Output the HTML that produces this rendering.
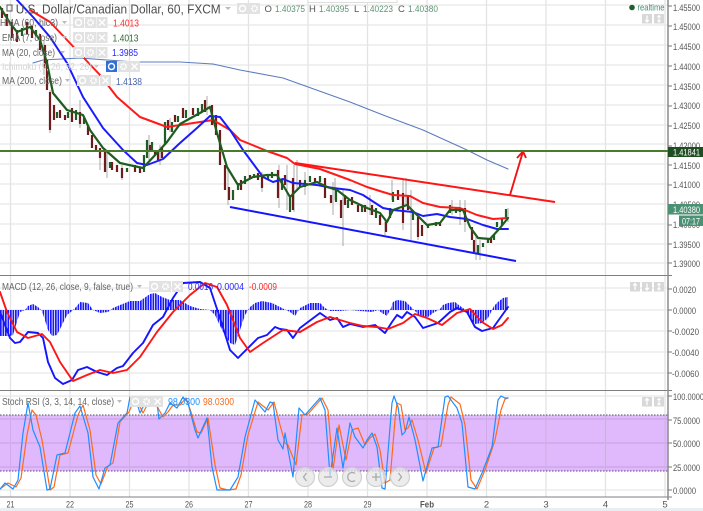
<!DOCTYPE html>
<html><head><meta charset="utf-8"><style>
html,body{margin:0;padding:0;background:#fff;width:703px;height:511px;overflow:hidden}
svg{display:block;filter:blur(.35px)}
text{font-family:"Liberation Sans",sans-serif;font-size:9.5px;fill:#555}
.a text{font-size:9.5px;fill:#555}
.l{font-size:10px;fill:#666}
.v{font-size:10px}
polyline{stroke-linejoin:round;stroke-linecap:round}
</style></head><body>
<svg width="703" height="511" viewBox="0 0 703 511" xmlns="http://www.w3.org/2000/svg">
<defs>
<pattern id="h" width="2.5" height="20" patternUnits="userSpaceOnUse"><rect width="1.7" height="20" fill="#1a1aff"/></pattern>
<g id="ib"><rect width="11" height="11" fill="#e2e2e2"/><circle cx="5.5" cy="5.5" r="3" fill="none" stroke="#fff" stroke-width="1.4"/></g>
<g id="ig"><rect width="11" height="11" fill="#e2e2e2"/><circle cx="5.5" cy="5.5" r="2.6" fill="none" stroke="#fff" stroke-width="2" stroke-dasharray="1.5 .8"/></g>
<g id="ix"><rect width="11" height="11" fill="#e2e2e2"/><path d="M2.5 2.5l6 6M8.5 2.5l-6 6" stroke="#fff" stroke-width="1.4"/></g>
<g id="au"><rect width="10" height="9.5" fill="#d8d8d8"/><path d="M5 1.5v6.5M3.2 3.5L5 1.5l1.8 2" stroke="#fff" stroke-width="1.3" fill="none"/></g>
<g id="ad"><rect width="10" height="9.5" fill="#d8d8d8"/><path d="M5 1.5v6.5M3.2 6L5 8l1.8-2" stroke="#fff" stroke-width="1.3" fill="none"/></g>
<g id="ab"><rect width="10" height="9.5" fill="#d8d8d8"/><path d="M5 1.5v6.5M3.5 3L5 1.5 6.5 3M3.5 6.5L5 8l1.5-1.5" stroke="#fff" stroke-width="1.1" fill="none"/></g>
</defs>

<!-- RSI band -->
<rect x="0" y="415" width="668" height="56" fill="#e0b9fc"/>

<!-- grid -->
<path d="M10.5 0V497M70 0V497M129.5 0V497M189 0V497M248.5 0V497M308 0V497M367.5 0V497M427 0V497M486.5 0V497M546 0V497M605.5 0V497M665 0V497" stroke="#e3e3e3" stroke-width="1.3" fill="none"/>
<path d="M0 5H668M0 25H668M0 45H668M0 65H668M0 85H668M0 105H668M0 125H668M0 144H668M0 164H668M0 184H668M0 204H668M0 224H668M0 244H668M0 263H668M0 288H668M0 310H668M0 331H668M0 352H668M0 373H668M0 396H668M0 490H668" stroke="#e6e6e6" stroke-width="1.3" fill="none"/>
<path d="M0 419H668M0 443H668M0 467H668" stroke="#c9a6e6" stroke-width="1.2" fill="none"/>
<path d="M10.5 415V471M70 415V471M129.5 415V471M189 415V471M248.5 415V471M308 415V471M367.5 415V471M427 415V471M486.5 415V471M546 415V471M605.5 415V471M665 415V471" stroke="#cfaaea" stroke-width="1.2" fill="none"/>
<path d="M0 415H668M0 471H668" stroke="#5d4a70" stroke-width="1" stroke-dasharray="1.5 1.5" fill="none"/>

<!-- separators -->
<path d="M0 275.5H672M0 390.5H672M0 497H672" stroke="#7f7f7f" stroke-width="1.1" fill="none"/>
<path d="M668 0V500" stroke="#8c8c8c" stroke-width="1.5" fill="none"/>
<path d="M668 6h4M668 26h4M668 46h4M668 66h4M668 86h4M668 106h4M668 126h4M668 146h4M668 165h4M668 185h4M668 205h4M668 225h4M668 244h4M668 263h4M668 289h4M668 310h4M668 331h4M668 352h4M668 373h4M668 396h4M668 420h4M668 443h4M668 467h4M668 490h4" stroke="#777" stroke-width="1" fill="none"/>
<rect x="0" y="508" width="703" height="3" fill="#e9eff1"/>

<!-- MA200 -->
<polyline fill="none" stroke="#5c7cc0" stroke-width="1.1" points="33,63 43,60 80,58 133,62 180,62 213,64 240,70 283,78 350,102 383,115 423,130 467,150 487,160 508,169"/>

<!-- wicks -->
<path d="M50 90V133M44 40V75M80 100V128M100 148V170M107 150V178M122 165V180M149 135V160M160 145V165M170 118V132M207 96V115M228 170V205M262 172V192M279 165V208M287 165V210M294 165V212M297 160V190M343 190V246M333 182V215M305 172V195M406 178V205M403 180V230M411 190V240M418 215V240M452 200V215M460 200V225M465 200V232M476 235V260M480 240V260M508 208V222M335 178V200M392 180V200M370 195V215M385 218V235" stroke="#a8a8a8" stroke-width="1" fill="none"/>

<!-- candles red -->
<path d="M2 8V18M7 14V26M12 22V38M17 30V42M27 22V34M32 26V38M40 34V50M45 45V68M47 60V90M50 92V130M54 105V120M60 110V118M65 115V120M72 108V122M80 112V124M88 125V135M92 135V148M96 145V152M100 148V158M105 152V172M112 162V170M117 165V172M122 168V178M135 165V172M140 168V173M150 145V152M155 150V155M158 152V160M162 148V158M168 120V130M175 115V122M183 108V118M193 108V115M205 100V112M212 105V125M216 115V135M220 130V165M225 165V190M229 187V200M241 180V190M250 175V178M258 173V180M262 176V188M278 170V198M285 175V185M293 178V210M300 180V187M315 178V183M325 178V198M331 195V203M341 200V218M345 195V205M352 197V205M358 205V212M365 205V212M372 205V215M380 215V225M386 222V232M398 190V200M403 193V223M408 195V210M418 217V237M422 225V236M440 222V226M465 208V222M472 227V240M474 240V252M491 238V243" stroke="#6e1b1b" stroke-width="2.2" fill="none"/>
<!-- candles green -->
<path d="M22 28V36M36 30V36M57 112V118M68 112V118M76 110V120M84 118V124M110 162V168M127 168V172M144 155V172M147 140V158M152 142V152M165 122V145M172 122V132M178 116V122M186 110V118M198 108V116M202 104V112M233 190V200M238 183V190M245 176V184M254 174V178M268 174V180M272 172V178M282 180V190M290 195V212M305 180V187M310 176V182M320 176V182M336 190V202M348 200V208M362 205V212M376 208V218M390 208V218M393 192V202M413 212V220M428 225V228M436 222V226M450 205V213M456 207V213M460 208V212M478 245V253M483 243V247M488 238V243M494 235V240M497 222V227M502 218V226M506 209V218" stroke="#1f5c26" stroke-width="2.2" fill="none"/>

<!-- main MA lines -->
<polyline fill="none" stroke="#ff1a1a" stroke-width="2" points="30,10 50,22 67,40 83,57 100,75 117,97 140,117 167,127 187,124 213,120 230,130 240,140 267,151 287,158 295,164 320,169 350,180 367,187 383,192 393,195 410,196 423,203 440,207 460,208 477,215 493,219 508,218"/>
<polyline fill="none" stroke="#1a1aff" stroke-width="2" points="17,0 33,17 50,37 67,63 83,97 103,128 123,150 137,163 147,165 163,159 180,143 197,128 210,116 220,117 230,130 243,150 263,177 273,182 283,179 293,183 317,185 333,188 350,190 363,195 383,208 393,210 413,212 423,216 437,214 450,217 467,219 483,225 497,229 508,229"/>
<polyline fill="none" stroke="#1f5c1f" stroke-width="2.2" points="0,7 10,23 17,32 30,27 40,40 47,63 53,93 67,110 83,115 90,130 103,148 120,163 143,168 157,153 167,142 180,124 200,113 210,107 217,133 227,167 238,185 253,177 267,175 277,175 290,197 300,187 317,182 327,187 337,190 350,200 367,208 380,213 387,222 393,210 407,205 417,215 427,225 440,223 450,210 463,210 470,227 478,238 490,239 500,228 508,218"/>

<!-- trend lines -->
<path d="M230 207L516 261" stroke="#1414ff" stroke-width="2" fill="none"/>
<path d="M295 163L555 202" stroke="#ff1414" stroke-width="2" fill="none"/>
<path d="M510 195L523 151.5M517 158L523 151.5L526 158" stroke="#f01414" stroke-width="1.9" fill="none"/>
<path d="M0 151H668" stroke="#4a7a2c" stroke-width="2" fill="none"/>

<!-- MACD -->
<polygon fill="url(#h)" points="0,310 0,336 10,336 13,335 16,325 20,312 25,310 28,306 33,304 38,307 42,311 48,330 52,336 57,335 62,325 67,315 72,311 77,306 80,302 88,303 93,310 100,313 108,312 113,308 120,305 130,301 140,301 150,294 155,293 162,297 170,300 180,300 190,306 200,309 210,310 215,315 222,330 230,343 235,345 240,330 245,315 250,307 255,303 262,301 272,303 280,307 290,312 295,316 300,308 310,303 320,303 325,308 330,311 340,311 350,310 360,311 372,312 378,310 382,313 387,316 391,308 393,302 397,300 405,301 410,306 415,311 420,316 428,317 433,313 440,309 443,305 448,303 455,302 460,306 466,310 470,318 475,324 482,323 488,318 491,312 494,306 498,302 503,298 508,297 508,310"/>
<polyline fill="none" stroke="#1414ff" stroke-width="1.9" points="0,312 5,325 10,338 15,343 20,342 28,332 38,333 43,338 48,362 55,378 63,384 72,380 78,370 87,367 97,372 107,375 117,368 123,366 133,353 143,343 153,325 163,317 173,298 183,283 200,282 210,288 220,318 230,350 238,358 258,338 267,335 275,327 280,329 287,330 293,338 300,328 320,313 330,320 337,318 343,327 350,324 363,327 375,325 385,333 392,322 397,315 402,318 407,312 415,317 423,328 438,323 450,312 457,308 467,312 475,327 482,331 493,328 508,307"/>
<polyline fill="none" stroke="#ff1414" stroke-width="1.9" points="0,292 7,312 17,332 28,338 42,334 50,342 60,362 73,381 87,375 100,370 113,373 127,370 140,357 157,332 173,312 190,295 205,283 217,287 227,305 240,338 250,352 263,343 283,330 300,332 317,322 330,317 350,323 363,326 377,327 388,329 403,323 415,314 427,318 442,325 457,313 470,309 482,322 493,329 502,325 508,318"/>

<!-- Stoch RSI -->
<polyline fill="none" stroke="#ff6a1a" stroke-width="1.2" points="0,489 8,483 16,487 21,478 27,435 32,410 36,415 42,440 50,490 54,487 60,455 68,453 78,415 83,405 90,430 96,475 101,484 108,466 113,463 120,422 129,412 134,400 139,405 143,413 151,398 158,408 163,417 168,412 173,405 180,405 186,398 191,412 197,432 201,433 208,418 215,465 220,488 228,490 236,489 241,475 248,435 258,402 268,410 274,402 280,425 285,443 288,445 296,465 302,415 308,414 322,398 328,410 333,470 339,425 346,460 352,430 358,428 365,445 370,438 375,434 380,450 385,483 390,480 395,420 397,403 401,405 405,430 408,428 412,420 418,440 426,473 434,448 441,446 448,405 451,397 460,404 465,425 471,480 477,489 485,470 495,440 501,410 505,399 508,398"/>
<polyline fill="none" stroke="#1f8fff" stroke-width="1.2" points="0,489 5,483 13,489 18,480 23,433 28,403 33,430 40,447 47,490 50,489 57,455 65,453 75,413 80,406 88,433 93,477 99,489 105,468 110,465 118,423 127,413 130,397 135,397 140,413 148,397 157,403 159,419 165,413 170,403 177,408 183,397 188,403 195,430 198,438 207,418 212,467 217,490 230,490 238,477 245,437 255,400 265,412 270,402 273,403 278,440 283,449 285,433 293,477 299,408 305,415 320,398 325,410 330,476 337,428 343,468 350,423 355,437 363,448 367,440 372,433 377,447 382,488 385,489 392,403 394,396 398,407 402,435 405,432 409,417 415,440 423,481 432,448 438,447 445,397 448,396 457,408 462,423 468,487 475,489 482,473 492,447 498,400 501,396 505,398 508,398"/>

<!-- nav circles -->
<g fill="#e6e6e6" fill-opacity=".75" stroke="#cfcfcf" stroke-width="1.2">
<circle cx="305" cy="477" r="9.5"/><circle cx="328" cy="477" r="9.5"/><circle cx="352" cy="477" r="9.5"/><circle cx="376" cy="477" r="9.5"/><circle cx="400" cy="477" r="9.5"/>
</g>
<path d="M306.5 473l-3 4 3 4M324 477h8M355 473.5a4.5 4.5 0 1 0 0 7M372 477h8M376 473v8M398.5 473l3 4-3 4" fill="none" stroke="#aaa" stroke-width="1.3"/>

<!-- header -->
<rect x="308" y="-2" width="89" height="4.5" fill="#fff" stroke="#ddd"/>
<rect x="7" y="5" width="5" height="6" fill="none" stroke="#555"/>
<text x="15.7" y="13.5" textLength="205" lengthAdjust="spacingAndGlyphs" style="font-size:12.5px;fill:#4d4d4d">U.S. Dollar/Canadian Dollar, 60, FXCM</text>
<path d="M225 7h6l-3 3z" fill="#bbb"/>
<use href="#ib" x="237" y="3"/><use href="#ig" x="249" y="3"/>
<text x="264.500" y="12">O</text><text x="275" y="12" textLength="30" lengthAdjust="spacingAndGlyphs" style="fill:#5d9373">1.40375</text>
<text x="309" y="12">H</text><text x="319" y="12" textLength="30" lengthAdjust="spacingAndGlyphs" style="fill:#5d9373">1.40395</text>
<text x="354" y="12">L</text><text x="363" y="12" textLength="30" lengthAdjust="spacingAndGlyphs" style="fill:#5d9373">1.40223</text>
<text x="398" y="12">C</text><text x="408" y="12" textLength="30" lengthAdjust="spacingAndGlyphs" style="fill:#5d9373">1.40380</text>
<circle cx="632" cy="7.5" r="2.8" fill="#1c5e30"/>
<text x="637.500" y="10.500" textLength="27" lengthAdjust="spacingAndGlyphs" style="fill:#4a8a70">realtime</text>
<use href="#ad" x="642" y="14"/><use href="#ab" x="654" y="14"/>

<!-- legends -->
<text class="l" x="0" y="26" textLength="58" lengthAdjust="spacingAndGlyphs">HMA (60, hlc3)</text><path d="M62 21h5l-2.5 3z" fill="#bbb"/>
<use href="#ib" x="73" y="17"/><use href="#ig" x="85" y="17"/><use href="#ix" x="96.5" y="17"/>
<text class="v" x="113" y="26.5" textLength="26" lengthAdjust="spacingAndGlyphs" style="fill:#ff2a2a">1.4013</text>
<text class="l" x="2" y="41" textLength="55" lengthAdjust="spacingAndGlyphs">EMA (7, close)</text><path d="M62 36h5l-2.5 3z" fill="#bbb"/>
<use href="#ib" x="73" y="32"/><use href="#ig" x="85" y="32"/><use href="#ix" x="96.5" y="32"/>
<text class="v" x="112.500" y="41.500" textLength="26" lengthAdjust="spacingAndGlyphs" style="fill:#2f6a2f">1.4013</text>
<text class="l" x="2" y="56" textLength="53" lengthAdjust="spacingAndGlyphs">MA (20, close)</text><path d="M60 51h5l-2.5 3z" fill="#bbb"/>
<use href="#ib" x="73" y="47"/><use href="#ig" x="85" y="47"/><use href="#ix" x="96.5" y="47"/>
<text class="v" x="112" y="56" textLength="26" lengthAdjust="spacingAndGlyphs" style="fill:#2a2aff">1.3985</text>
<text class="l" x="2" y="70" textLength="90" lengthAdjust="spacingAndGlyphs" style="fill:#d4d4d4">Ichimoku (9, 26, 52, 26)</text><path d="M94 65h5l-2.5 3z" fill="#ccc"/>
<rect x="106" y="61" width="11" height="11" fill="#2f6fd6"/><circle cx="111.5" cy="66.5" r="3" fill="none" stroke="#fff" stroke-width="1.4"/>
<use href="#ig" x="118" y="61"/><use href="#ix" x="129" y="61"/>
<text class="l" x="2" y="84" textLength="60" lengthAdjust="spacingAndGlyphs">MA (200, close)</text><path d="M65 79h5l-2.5 3z" fill="#bbb"/>
<use href="#ib" x="77" y="75"/><use href="#ig" x="88" y="75"/><use href="#ix" x="100" y="75"/>
<text class="v" x="116" y="85" textLength="26" lengthAdjust="spacingAndGlyphs" style="fill:#4a63a8">1.4138</text>

<text class="l" x="2" y="290" textLength="131" lengthAdjust="spacingAndGlyphs">MACD (12, 26, close, 9, false, true)</text><path d="M137 285h5l-2.5 3z" fill="#bbb"/>
<use href="#ib" x="149" y="281"/><use href="#ig" x="160" y="281"/><use href="#ix" x="172" y="281"/>
<text class="v" x="188" y="290" textLength="25" lengthAdjust="spacingAndGlyphs" style="fill:#2a2aff">0.0016</text>
<text class="v" x="217" y="290" textLength="27" lengthAdjust="spacingAndGlyphs" style="fill:#2a2aff">0.0004</text>
<text class="v" x="249" y="290" textLength="28" lengthAdjust="spacingAndGlyphs" style="fill:#ff2a2a">-0.0009</text>
<use href="#au" x="630" y="282"/><use href="#ad" x="642" y="282"/><use href="#ab" x="654" y="282"/>

<text class="l" x="2" y="405" textLength="112" lengthAdjust="spacingAndGlyphs">Stoch RSI (3, 3, 14, 14, close)</text><path d="M117 400h5l-2.5 3z" fill="#bbb"/>
<use href="#ib" x="130" y="396"/><use href="#ig" x="141" y="396"/><use href="#ix" x="152" y="396"/>
<text class="v" x="168" y="405" textLength="32" lengthAdjust="spacingAndGlyphs" style="fill:#1f8fff">98.0300</text>
<text class="v" x="203" y="405" textLength="31" lengthAdjust="spacingAndGlyphs" style="fill:#ff6a1a">98.0300</text>
<use href="#au" x="642" y="397"/><use href="#ab" x="654" y="397"/>

<!-- y axis -->
<g class="a">
<text x="673" y="11" textLength="27" lengthAdjust="spacingAndGlyphs">1.45500</text><text x="673" y="30" textLength="27" lengthAdjust="spacingAndGlyphs">1.45000</text><text x="673" y="50" textLength="27" lengthAdjust="spacingAndGlyphs">1.44500</text><text x="673" y="70" textLength="27" lengthAdjust="spacingAndGlyphs">1.44000</text><text x="673" y="90" textLength="27" lengthAdjust="spacingAndGlyphs">1.43500</text><text x="673" y="109" textLength="27" lengthAdjust="spacingAndGlyphs">1.43000</text><text x="673" y="129" textLength="27" lengthAdjust="spacingAndGlyphs">1.42500</text><text x="673" y="149" textLength="27" lengthAdjust="spacingAndGlyphs">1.42000</text><text x="673" y="169" textLength="27" lengthAdjust="spacingAndGlyphs">1.41500</text><text x="673" y="188" textLength="27" lengthAdjust="spacingAndGlyphs">1.41000</text><text x="673" y="208" textLength="27" lengthAdjust="spacingAndGlyphs">1.40500</text><text x="673" y="228" textLength="27" lengthAdjust="spacingAndGlyphs">1.40000</text><text x="673" y="248" textLength="27" lengthAdjust="spacingAndGlyphs">1.39500</text><text x="673" y="267" textLength="27" lengthAdjust="spacingAndGlyphs">1.39000</text>
<text x="673" y="293" textLength="23" lengthAdjust="spacingAndGlyphs">0.0020</text><text x="673" y="314" textLength="23" lengthAdjust="spacingAndGlyphs">0.0000</text><text x="672" y="335" textLength="27" lengthAdjust="spacingAndGlyphs">-0.0020</text><text x="672" y="356" textLength="27" lengthAdjust="spacingAndGlyphs">-0.0040</text><text x="672" y="377" textLength="27" lengthAdjust="spacingAndGlyphs">-0.0060</text>
<text x="673" y="400" textLength="31" lengthAdjust="spacingAndGlyphs">100.0000</text><text x="673" y="424" textLength="27" lengthAdjust="spacingAndGlyphs">75.0000</text><text x="673" y="447" textLength="27" lengthAdjust="spacingAndGlyphs">50.0000</text><text x="673" y="471" textLength="27" lengthAdjust="spacingAndGlyphs">25.0000</text><text x="673" y="494" textLength="23" lengthAdjust="spacingAndGlyphs">0.0000</text>
</g>
<rect x="668" y="147" width="35" height="10" fill="#1f4d22"/>
<text x="673" y="155.500" textLength="27" lengthAdjust="spacingAndGlyphs" style="fill:#fff">1.41841</text>
<rect x="668" y="204" width="35" height="10.5" fill="#4b9275"/>
<text x="673" y="213" textLength="27" lengthAdjust="spacingAndGlyphs" style="fill:#fff">1.40380</text>
<rect x="679" y="215.5" width="24" height="10.5" fill="#4b9275"/>
<text x="682" y="224.500" textLength="18" lengthAdjust="spacingAndGlyphs" style="fill:#fff">07:17</text>

<!-- x axis -->
<g class="a" text-anchor="middle">
<text x="10.500" y="507.500" textLength="8" lengthAdjust="spacingAndGlyphs">21</text><text x="70" y="507.500" textLength="8" lengthAdjust="spacingAndGlyphs">22</text><text x="129.500" y="507.500" textLength="8" lengthAdjust="spacingAndGlyphs">25</text><text x="189" y="507.500" textLength="8" lengthAdjust="spacingAndGlyphs">26</text><text x="248.500" y="507.500" textLength="8" lengthAdjust="spacingAndGlyphs">27</text><text x="308" y="507.500" textLength="8" lengthAdjust="spacingAndGlyphs">28</text><text x="367.500" y="507.500" textLength="8" lengthAdjust="spacingAndGlyphs">29</text><text x="427" y="507.500" font-weight="bold" textLength="14" lengthAdjust="spacingAndGlyphs">Feb</text><text x="486.500" y="507.500">2</text><text x="546" y="507.500">3</text><text x="605.500" y="507.500">4</text><text x="665" y="507.500">5</text>
</g>
</svg>
</body></html>
